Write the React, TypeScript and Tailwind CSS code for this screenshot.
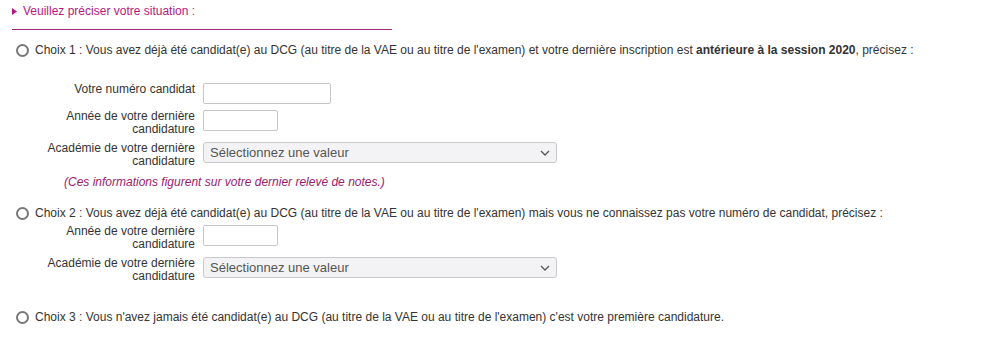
import React from "react";

const labelCls =
  "w-[152px] shrink-0 text-right text-[12px] leading-[13px] text-[#333]";

function Chevron() {
  return (
    <svg width="10" height="6" viewBox="0 0 10 6" className="shrink-0">
      <path d="M1 1l4 4 4-4" fill="none" stroke="#555" strokeWidth="1.3" />
    </svg>
  );
}

function SelectBox() {
  return (
    <div className="w-[354px] h-[21px] flex items-center justify-between pl-[6px] pr-[6px] bg-[#f3f3f5] border border-[#c9c9cc] rounded-[3px] text-[13px] text-[#555]">
      <span>Sélectionnez une valeur</span>
      <Chevron />
    </div>
  );
}

function TextBox({ w }: { w: string }) {
  return (
    <div
      className={`${w} h-[21px] bg-white border border-[#c6c6c6] rounded-[2px]`}
    />
  );
}

function Row({
  label,
  children,
}: {
  label: React.ReactNode;
  children: React.ReactNode;
}) {
  return (
    <div className="flex items-start gap-[8px] pl-[31px]">
      <div className={labelCls}>{label}</div>
      {children}
    </div>
  );
}

function Choice({ children }: { children: React.ReactNode }) {
  return (
    <label className="flex items-center gap-[6px] h-[14px] pl-[4px]">
      <span className="w-[13px] h-[13px] rounded-full border-2 border-[#777] bg-white shrink-0" />
      <span className="text-[12px] leading-[14px] text-[#333]">{children}</span>
    </label>
  );
}

export default function App() {
  return (
    <div className="w-[985px] h-[337px] bg-white pl-[12px] font-['Liberation_Sans',Arial,sans-serif]">
      <div className="w-[380px] h-[30px] border-b border-[#a8287a] pt-[4px] flex items-start">
        <div className="flex items-center gap-[6px] h-[14px] text-[12px] text-[#b5177f]">
          <svg width="5" height="7" viewBox="0 0 5 7">
            <path d="M0 0l5 3.5L0 7z" fill="#b5177f" />
          </svg>
          <span>Veuillez préciser votre situation :</span>
        </div>
      </div>

      <div className="mt-[13px]">
        <Choice>
          Choix 1 : Vous avez déjà été candidat(e) au DCG (au titre de la VAE ou
          au titre de l'examen) et votre dernière inscription est{" "}
          <b>antérieure à la session 2020</b>, précisez :
        </Choice>
      </div>

      <div className="mt-[26px] flex flex-col gap-[6px]">
        <Row label="Votre numéro candidat">
          <TextBox w="w-[128px]" />
        </Row>
        <Row label="Année de votre dernière candidature">
          <TextBox w="w-[75px]" />
        </Row>
        <Row label="Académie de votre dernière candidature">
          <SelectBox />
        </Row>
      </div>

      <div className="mt-[7px] pl-[52px] text-[12px] leading-[14px] italic text-[#9b1a6e]">
        (Ces informations figurent sur votre dernier relevé de notes.)
      </div>

      <div className="mt-[17px]">
        <Choice>
          Choix 2 : Vous avez déjà été candidat(e) au DCG (au titre de la VAE ou
          au titre de l'examen) mais vous ne connaissez pas votre numéro de
          candidat, précisez :
        </Choice>
      </div>

      <div className="mt-[5px] flex flex-col gap-[6px]">
        <Row label="Année de votre dernière candidature">
          <TextBox w="w-[75px]" />
        </Row>
        <Row label="Académie de votre dernière candidature">
          <SelectBox />
        </Row>
      </div>

      <div className="mt-[27px]">
        <Choice>
          Choix 3 : Vous n'avez jamais été candidat(e) au DCG (au titre de la
          VAE ou au titre de l'examen) c'est votre première candidature.
        </Choice>
      </div>
    </div>
  );
}
